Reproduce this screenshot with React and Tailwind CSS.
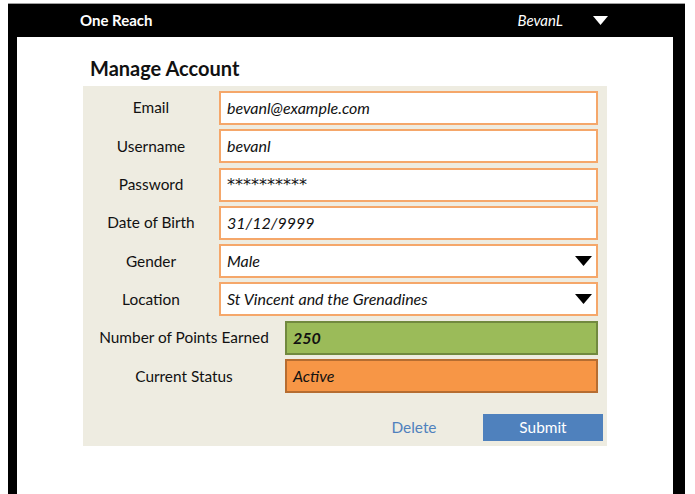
import React from "react";

const font = { fontFamily: "Lato, 'Open Sans', sans-serif" };

function Tri({ className }) {
  return (
    <svg viewBox="0 0 17 10" className={className}>
      <polygon points="0,0 17,0 8.5,10" fill="currentColor" />
    </svg>
  );
}

function Field({ label, value, select, mono }) {
  return (
    <div className="flex h-[34px] items-stretch">
      <div className="w-[136px] flex items-center justify-center text-[15.4px] text-[#111]">
        {label}
      </div>
      <div className="flex-1 flex items-center justify-between border-2 border-[#f5a76a] bg-white pl-[6px] pr-[4px]">
        {mono ? (
          <span className="text-[16px] text-[#111] [font-family:'DejaVu_Sans',sans-serif]">{value}</span>
        ) : (
          <span className="italic text-[16px] text-[#111]">{value}</span>
        )}
        {select && <Tri className="w-[17px] h-[10px] text-black" />}
      </div>
    </div>
  );
}

function Stat({ label, value, bg, border, bold }) {
  return (
    <div className="flex h-[34px] items-stretch">
      <div className="w-[202px] flex items-center justify-center text-[15.4px] text-[#111]">
        {label}
      </div>
      <div className={`flex-1 flex items-center border-2 pl-[6px] ${bg} ${border}`}>
        <span className={`italic text-[16px] text-[#111] ${bold ? "font-bold" : ""}`}>{value}</span>
      </div>
    </div>
  );
}

export default function App() {
  return (
    <div className="w-[695px] h-[494px] bg-white overflow-hidden pt-[3px] pl-[8px]" style={font}>
      <div className="w-[677px] h-[491px] bg-black border-t border-[#a0a0a0] flex flex-col">
        <div className="h-[33px] flex items-center text-white shrink-0">
          <span className="ml-[72px] font-bold text-[15px]">One Reach</span>
          <span className="ml-auto italic text-[15px]">BevanL</span>
          <Tri className="w-[15px] h-[11px] ml-[30px] mr-[77px] text-white" />
        </div>
        <div className="flex-1 bg-white ml-[9px] mr-[12px]">
          <div className="pl-[73px] pt-[19px] h-[49px] font-bold text-[20px] text-[#111] leading-[24px]">
            Manage Account
          </div>
          <div className="ml-[66px] w-[524px] bg-[#eeece1] pt-[5px] pr-[9px] pb-[5px]">
            <div className="flex flex-col gap-[4.3px]">
              <Field label="Email" value="bevanl@example.com" />
              <Field label="Username" value="bevanl" />
              <Field label="Password" value="**********" mono />
              <Field label="Date of Birth" value="31/12/9999" />
              <Field label="Gender" value="Male" select />
              <Field label="Location" value="St Vincent and the Grenadines" select />
              <Stat label="Number of Points Earned" value="250" bg="bg-[#9bbb59]" border="border-[#71893f]" bold />
              <Stat label="Current Status" value="Active" bg="bg-[#f79646]" border="border-[#b66d31]" />
            </div>
            <div className="flex items-center justify-end mt-[21px] mr-[-5px]">
              <button className="w-[100px] text-[15.4px] text-[#4f81bd]">Delete</button>
              <button className="ml-[19px] w-[120px] h-[27px] bg-[#4f81bd] text-white text-[15.4px]">Submit</button>
            </div>
          </div>
        </div>
      </div>
    </div>
  );
}
